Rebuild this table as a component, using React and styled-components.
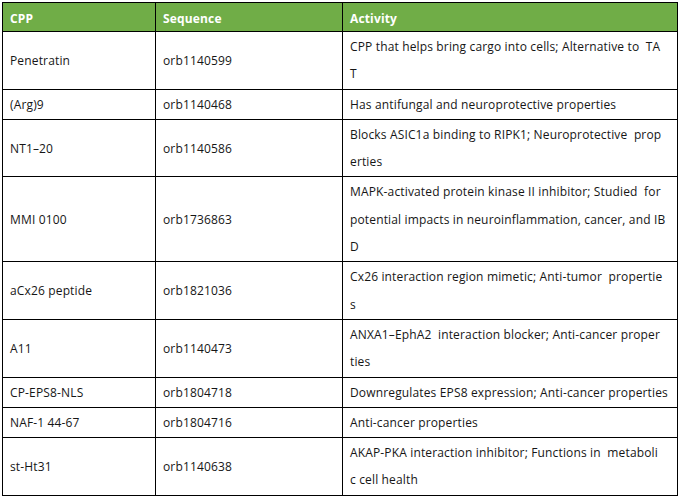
import styled, { createGlobalStyle } from 'styled-components'

const rows = [
  { cpp: 'Penetratin', seq: 'orb1140599', activity: ['CPP that helps bring cargo into cells; Alternative to  TA', 'T'] },
  { cpp: '(Arg)9', seq: 'orb1140468', activity: ['Has antifungal and neuroprotective properties'] },
  { cpp: 'NT1–20', seq: 'orb1140586', activity: ['Blocks ASIC1a binding to RIPK1; Neuroprotective  prop', 'erties'] },
  {
    cpp: 'MMI 0100',
    seq: 'orb1736863',
    activity: [
      'MAPK-activated protein kinase II inhibitor; Studied  for',
      'potential impacts in neuroinflammation, cancer, and IB',
      'D',
    ],
  },
  { cpp: 'aCx26 peptide', seq: 'orb1821036', activity: ['Cx26 interaction region mimetic; Anti-tumor  propertie', 's'] },
  { cpp: 'A11', seq: 'orb1140473', activity: ['ANXA1–EphA2  interaction blocker; Anti-cancer proper', 'ties'] },
  { cpp: 'CP-EPS8-NLS', seq: 'orb1804718', activity: ['Downregulates EPS8 expression; Anti-cancer properties'] },
  { cpp: 'NAF-1 44-67', seq: 'orb1804716', activity: ['Anti-cancer properties'] },
  { cpp: 'st-Ht31', seq: 'orb1140638', activity: ['AKAP-PKA interaction inhibitor; Functions in  metaboli', 'c cell health'] },
]

const GlobalStyle = createGlobalStyle`
  body {
    margin: 0;
    background: #ffffff;
    font-family: "Open Sans", "Noto Sans", "Liberation Sans", sans-serif;
  }
`

const Page = styled.div`
  padding: 2px 2px 0 2px;
`

const Table = styled.table`
  width: 676px;
  border-collapse: collapse;
  table-layout: fixed;
  font-size: 12px;
  letter-spacing: 0.15px;
  color: #161616;
`

const HeadCell = styled.th`
  background: #70ad47;
  color: #ffffff;
  font-weight: 700;
  text-align: left;
  padding: 4px 7px 0 7px;
  border: 1px solid #000;
  line-height: 24px;
`

const Cell = styled.td`
  border: 1px solid #000;
  padding: 1px 7px;
  line-height: 27.3px;
  vertical-align: middle;
`

const Line = styled.div`
  white-space: pre;
`

const App = () => {
  return (
    <Page>
      <GlobalStyle />
      <Table>
        <colgroup>
          <col style={{ width: 153 }} />
          <col style={{ width: 187 }} />
          <col />
        </colgroup>
        <thead>
          <tr>
            <HeadCell>CPP</HeadCell>
            <HeadCell>Sequence</HeadCell>
            <HeadCell>Activity</HeadCell>
          </tr>
        </thead>
        <tbody>
          {rows.map((r) => (
            <tr key={r.seq}>
              <Cell>{r.cpp}</Cell>
              <Cell>{r.seq}</Cell>
              <Cell>
                {r.activity.map((l, i) => (
                  <Line key={i}>{l}</Line>
                ))}
              </Cell>
            </tr>
          ))}
        </tbody>
      </Table>
    </Page>
  )
}

export default App
